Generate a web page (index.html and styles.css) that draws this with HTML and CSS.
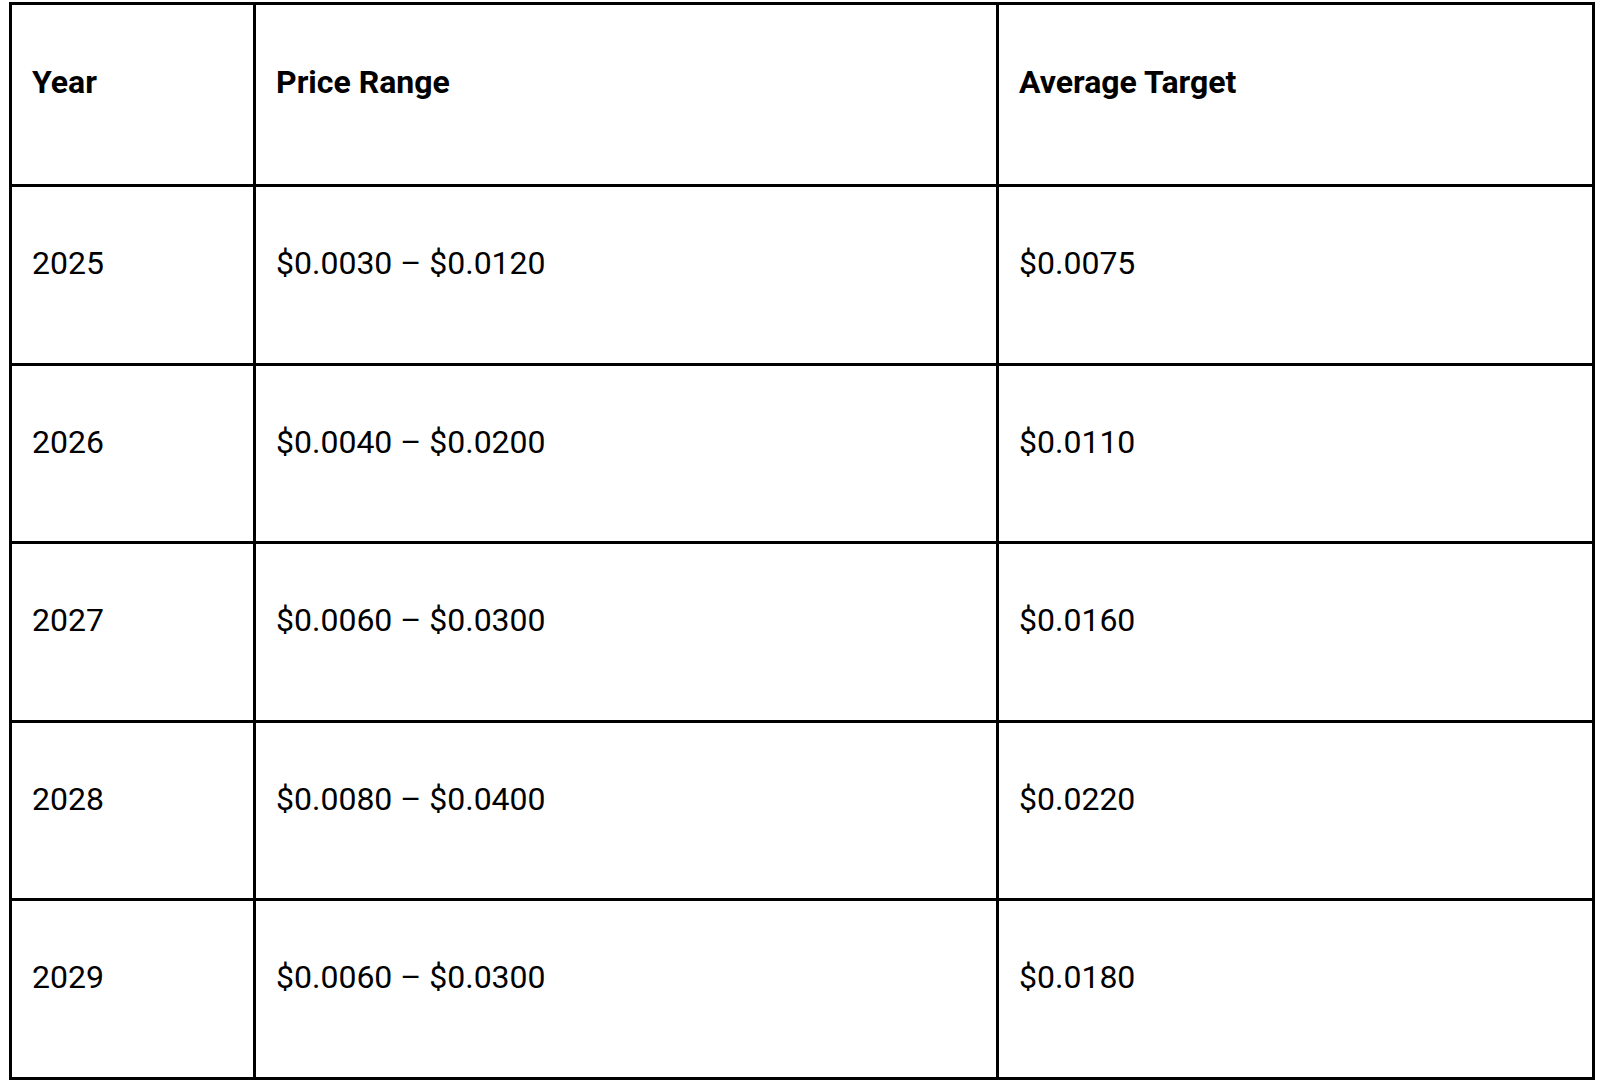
FILE: index.html
```html
<!DOCTYPE html>
<html lang="en">
<head>
<meta charset="utf-8">
<title>Price Prediction</title>
<link rel="stylesheet" href="styles.css">
</head>
<body>
<table class="price-table">
  <colgroup>
    <col class="col-year">
    <col class="col-range">
    <col class="col-avg">
  </colgroup>
  <thead>
    <tr class="head-row">
      <th>Year</th>
      <th>Price Range</th>
      <th>Average Target</th>
    </tr>
  </thead>
  <tbody>
    <tr><td>2025</td><td>$0.0030 – $0.0120</td><td>$0.0075</td></tr>
    <tr><td>2026</td><td>$0.0040 – $0.0200</td><td>$0.0110</td></tr>
    <tr><td>2027</td><td>$0.0060 – $0.0300</td><td>$0.0160</td></tr>
    <tr><td>2028</td><td>$0.0080 – $0.0400</td><td>$0.0220</td></tr>
    <tr><td>2029</td><td>$0.0060 – $0.0300</td><td>$0.0180</td></tr>
  </tbody>
</table>
</body>
</html>
```

FILE: styles.css
```css
html, body {
  margin: 0;
  padding: 0;
  background: #ffffff;
}

body {
  font-family: Roboto, "Liberation Sans", Arial, sans-serif;
  color: #000000;
}

.price-table {
  border-collapse: separate;
  border-spacing: 0;
  border-top: 3px solid #000000;
  border-left: 3px solid #000000;
  margin: 2px 0 0 9px;
  width: 1586px;
  table-layout: fixed;
}

.col-year { width: 244px; }
.col-range { width: 743px; }
.col-avg { width: 596px; }

.price-table th,
.price-table td {
  border-right: 3px solid #000000;
  border-bottom: 3px solid #000000;
  font-size: 32px;
  line-height: 48px;
  text-align: left;
  vertical-align: top;
  padding: 52px 20px 0 20px;
}

.price-table th {
  font-weight: 700;
  padding-top: 53px;
}

.price-table td {
  font-weight: 400;
}

.head-row {
  height: 182px;
}

.price-table tbody tr {
  height: 179px;
}

.price-table tbody tr:nth-child(even) {
  height: 178px;
}
```
